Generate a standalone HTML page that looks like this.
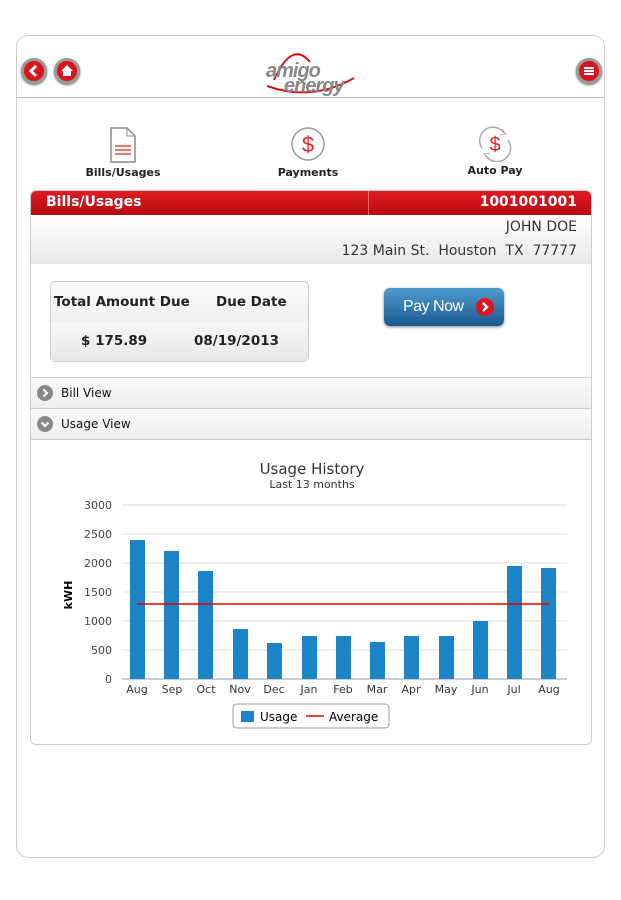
<!DOCTYPE html><html><head><style>
body{margin:0;width:621px;height:900px;background:#fff;font-family:"DejaVu Sans",sans-serif;position:relative;overflow:hidden}
.a{position:absolute}
.frame{left:16px;top:35px;width:587px;height:821px;border:1px solid #ccc;border-radius:12px}
.rb{width:20px;height:20px;border-radius:50%;background:#d9141c;border:3px solid #9a9a9a;box-sizing:content-box;box-shadow:0 1px 2px #666}
.lbl{font-size:11px;font-weight:bold;color:#222;text-align:center;width:120px}
.card{left:30px;top:190px;width:560px;height:553px;border:1px solid #ccc;border-radius:6px;overflow:hidden}
.hdr{left:0;top:0;width:560px;height:24px;background:linear-gradient(#e01b22,#b80a12);color:#fff;font-weight:bold;font-size:14px}
.row{left:0;width:560px;height:30px;background:linear-gradient(#fafafa,#eee);border-top:1px solid #ccc;font-size:12px;color:#111}
.arr{width:16px;height:16px;border-radius:50%;background:#888;top:7px;left:6px}
</style></head><body>
<div class="a frame"></div>
<div class="a rb" style="left:21px;top:58px"><svg width="20" height="20"><path d="M12 5 L7 10 L12 15" stroke="#fff" stroke-width="3" fill="none"/></svg></div>
<div class="a rb" style="left:54px;top:58px"><svg width="20" height="20"><path d="M10 4 L16 10 H14 V15 H6 V10 H4 Z" fill="#fff"/></svg></div>
<div class="a rb" style="left:576px;top:58px"><svg width="20" height="20"><rect x="5" y="6" width="10" height="2" fill="#fff"/><rect x="5" y="9" width="10" height="2" fill="#fff"/><rect x="5" y="12" width="10" height="2" fill="#fff"/></svg></div>
<svg class="a" style="left:262px;top:50px" width="100" height="48"><path d="M12 30 Q30 -10 48 12" stroke="#d9141c" stroke-width="2" fill="none"/><path d="M5 36 Q50 52 92 28" stroke="#d9141c" stroke-width="2" fill="none"/><text x="4" y="27" font-size="20" font-weight="bold" font-style="italic" fill="#888" font-family="Liberation Sans" letter-spacing="-1">amigo</text><text x="22" y="42" font-size="20" font-weight="bold" font-style="italic" fill="#888" font-family="Liberation Sans" letter-spacing="-1">energy</text></svg>
<div class="a" style="left:17px;top:97px;width:587px;height:1px;background:#bbb"></div>
<svg class="a" style="left:109px;top:126px" width="28" height="38"><path d="M2 2 H18 L26 10 V36 H2 Z" fill="#fff" stroke="#888" stroke-width="1.5"/><path d="M18 2 V10 H26" fill="none" stroke="#888"/><path d="M6 20H22M6 24H22M6 28H22" stroke="#e22" stroke-width="1.3"/></svg>
<div class="a lbl" style="left:63px;top:166px">Bills/Usages</div>
<svg class="a" style="left:290px;top:126px" width="36" height="36"><circle cx="18" cy="18" r="16" fill="#fff" stroke="#999" stroke-width="1.5"/><text x="18" y="26" font-size="22" text-anchor="middle" fill="#e22" font-family="Liberation Sans">$</text></svg>
<div class="a lbl" style="left:248px;top:166px">Payments</div>
<svg class="a" style="left:476px;top:126px" width="38" height="36"><path d="M6 22 A13 13 0 0 1 28 7" stroke="#aaa" stroke-width="1.5" fill="none"/><path d="M32 14 A13 13 0 0 1 10 30" stroke="#aaa" stroke-width="1.5" fill="none"/><path d="M26 3 L30 8 L24 9" stroke="#aaa" fill="none"/><path d="M12 33 L8 28 L14 27" stroke="#aaa" fill="none"/><text x="19" y="25" font-size="20" text-anchor="middle" fill="#e22" font-family="Liberation Sans">$</text></svg>
<div class="a lbl" style="left:435px;top:164px">Auto Pay</div>
<div class="a card">
<div class="a hdr"><span class="a" style="left:15px;top:3px">Bills/Usages</span><div class="a" style="left:337px;top:0;width:1px;height:24px;background:#e66"></div><span class="a" style="right:14px;top:3px">1001001001</span></div>
<div class="a" style="left:0;top:24px;width:560px;height:49px;background:linear-gradient(#fff,#e8e8e8);font-size:14px;color:#333"><span class="a" style="right:14px;top:4px">JOHN DOE</span><span class="a" style="right:14px;top:28px">123 Main St.&nbsp; Houston&nbsp; TX&nbsp; 77777</span></div>
<div class="a" style="left:19px;top:90px;width:257px;height:79px;border:1px solid #ccc;border-radius:5px;background:linear-gradient(#fafafa,#e6e6e6);font-size:13.5px;font-weight:bold;color:#222">
<span class="a" style="left:3px;top:12px">Total Amount Due</span><span class="a" style="left:165px;top:12px">Due Date</span>
<div class="a" style="left:0;top:40px;width:257px;height:39px;background:linear-gradient(#f7f7f7,#e8e8e8)"></div>
<span class="a" style="left:30px;top:51px">$ 175.89</span><span class="a" style="left:143px;top:51px">08/19/2013</span></div>
<div class="a" style="left:353px;top:97px;width:120px;height:38px;border-radius:6px;background:linear-gradient(#4d9bd0,#1b5a8e);box-shadow:0 1px 3px #888;color:#fff;font-size:16px;font-family:'Liberation Sans'"><span class="a" style="left:19px;top:10px;letter-spacing:-0.5px">Pay Now</span><div class="a" style="left:92px;top:10px;width:18px;height:18px;border-radius:50%;background:#e0141c"><svg width="18" height="18"><path d="M7 5 L11 9 L7 13" stroke="#fff" stroke-width="2.5" fill="none"/></svg></div></div>
<div class="a row" style="top:186px"><div class="a arr"><svg width="16" height="16"><path d="M6.5 4.5 L10 8 L6.5 11.5" stroke="#fff" stroke-width="2.2" fill="none"/></svg></div><span class="a" style="left:30px;top:8px">Bill View</span></div>
<div class="a row" style="top:217px"><div class="a arr"><svg width="16" height="16"><path d="M4.5 6.5 L8 10 L11.5 6.5" stroke="#fff" stroke-width="2.2" fill="none"/></svg></div><span class="a" style="left:30px;top:8px">Usage View</span></div>
<div class="a" style="left:0;top:248px;width:560px;height:1px;background:#ccc"></div>
</div>
<svg class="a" style="left:60px;top:455px" width="530" height="280" font-family="DejaVu Sans">
<text x="252" y="19" font-size="15" text-anchor="middle" fill="#333">Usage History</text>
<text x="252" y="33" font-size="11" text-anchor="middle" fill="#333">Last 13 months</text>
<g stroke="#ddd"><line x1="62" x2="507" y1="50" y2="50"/><line x1="62" x2="507" y1="79" y2="79"/><line x1="62" x2="507" y1="108" y2="108"/><line x1="62" x2="507" y1="137" y2="137"/><line x1="62" x2="507" y1="166" y2="166"/><line x1="62" x2="507" y1="195" y2="195"/></g>
<line x1="62" x2="507" y1="224" y2="224" stroke="#999"/>
<g font-size="11" fill="#444" text-anchor="end"><text x="52" y="54">3000</text><text x="52" y="83">2500</text><text x="52" y="112">2000</text><text x="52" y="141">1500</text><text x="52" y="170">1000</text><text x="52" y="199">500</text><text x="52" y="228">0</text></g>
<text x="12" y="140" font-size="11" font-weight="bold" transform="rotate(-90 12 140)" text-anchor="middle">kWH</text>
<g fill="#1a84c6">
<rect x="70" y="85" width="15" height="139"/><rect x="104" y="96" width="15" height="128"/><rect x="138" y="116" width="15" height="108"/><rect x="173" y="174" width="15" height="50"/><rect x="207" y="188" width="15" height="36"/><rect x="242" y="181" width="15" height="43"/><rect x="276" y="181" width="15" height="43"/><rect x="310" y="187" width="15" height="37"/><rect x="344" y="181" width="15" height="43"/><rect x="379" y="181" width="15" height="43"/><rect x="413" y="166" width="15" height="58"/><rect x="447" y="111" width="15" height="113"/><rect x="481" y="113" width="15" height="111"/></g>
<line x1="77" x2="489" y1="149" y2="149" stroke="#e00" stroke-width="1.5"/>
<g font-size="11" fill="#333" text-anchor="middle"><text x="77" y="238">Aug</text><text x="112" y="238">Sep</text><text x="146" y="238">Oct</text><text x="180" y="238">Nov</text><text x="214" y="238">Dec</text><text x="249" y="238">Jan</text><text x="283" y="238">Feb</text><text x="317" y="238">Mar</text><text x="351" y="238">Apr</text><text x="386" y="238">May</text><text x="420" y="238">Jun</text><text x="454" y="238">Jul</text><text x="489" y="238">Aug</text></g>
<rect x="173" y="249" width="156" height="24" rx="4" fill="#fff" stroke="#999"/>
<rect x="181" y="256" width="13" height="11" fill="#1a84c6"/><text x="200" y="266" font-size="12">Usage</text>
<line x1="246" x2="264" y1="261" y2="261" stroke="#e00" stroke-width="1.5"/><text x="269" y="266" font-size="12">Average</text>
</svg>
</body></html>
